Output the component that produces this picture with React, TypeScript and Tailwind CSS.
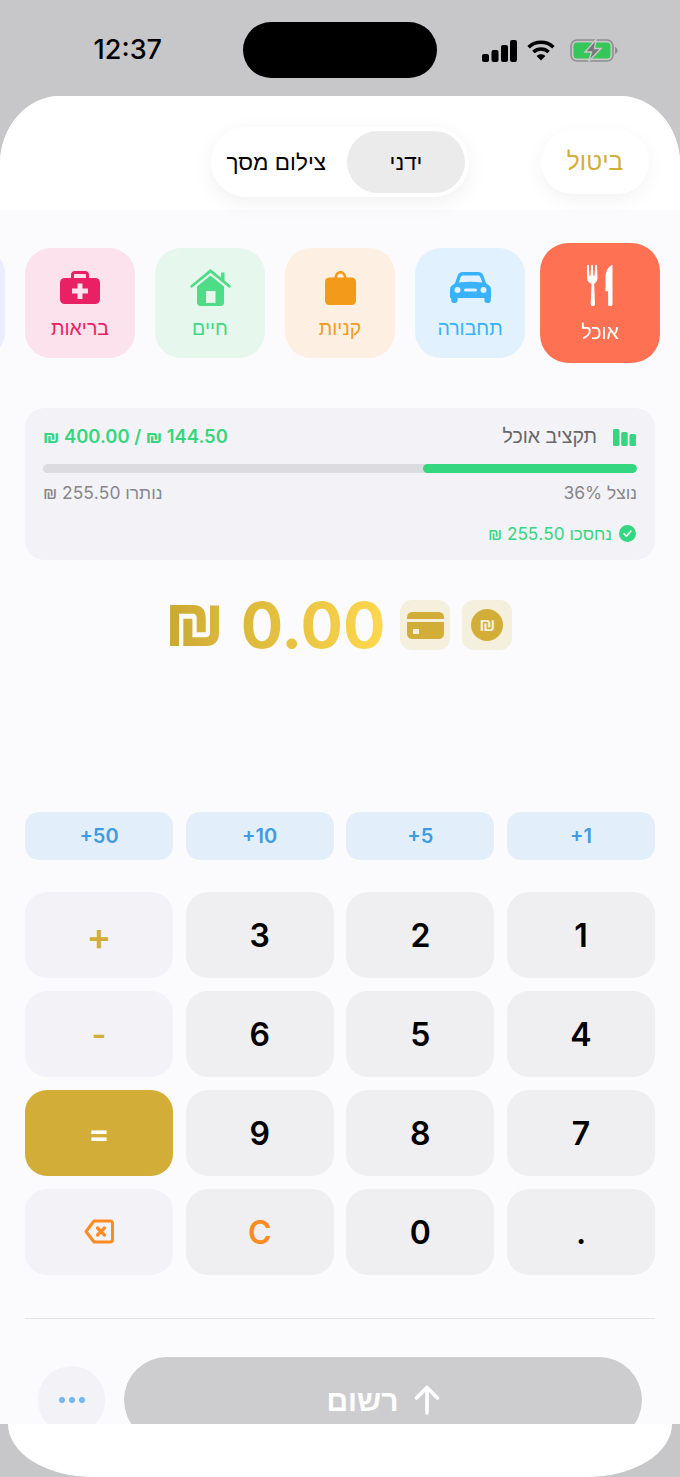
import React from "react";

const Signal = () => (
  <svg width="35" height="22" viewBox="0 0 35 22" fill="#000">
    <rect x="0" y="14" width="7" height="8" rx="2" />
    <rect x="9.5" y="10" width="7" height="12" rx="2" />
    <rect x="19" y="5" width="7" height="17" rx="2" />
    <rect x="28" y="0" width="7" height="22" rx="2" />
  </svg>
);
const Wifi = () => (
  <svg width="28" height="21" viewBox="0 0 28 21" fill="none" stroke="#000" strokeWidth="3.6">
    <path d="M1.6 7.2C8.6 .6 19.4 .6 26.4 7.2" />
    <path d="M6.4 12C10.8 8 17.2 8 21.6 12" />
    <path d="M14 20.5L9.6 16C12 13.8 16 13.8 18.4 16Z" fill="#000" stroke="none" />
  </svg>
);
const Battery = () => (
  <svg width="48" height="23" viewBox="0 0 48 23" fill="none">
    <rect x="1" y="1" width="42" height="21" rx="6" stroke="#8e8e90" strokeWidth="1.6" />
    <rect x="3.5" y="3.5" width="37" height="16" rx="3.5" fill="#35c759" />
    <path d="M45 8c1.6.4 2.5 1.8 2.5 3.5S46.600 14.600 45 15z" fill="#8e8e90" />
    <path d="M26 0.500L15 13h6.500l-3 9.500L31 9.500h-6.500z" fill="#77777a" stroke="#c9c9cb" strokeWidth="1.400" />
  </svg>
);

const ForkKnife = () => (
  <svg width="24" height="38.500" viewBox="0 0 26 42" fill="#fff">
    <path d="M0 0h1.800l.7 11h1.100l.500-11h1.800l.500 11h1.100l.700-11h1.800l.500 13c0 3-1.500 5-3.300 6l.8 20.500a2.100 2.100 0 01-4.300 0l.800-20.500C1.500 18 0 16 0 13z" />
    <path d="M25.500 0v39.500a2.200 2.200 0 01-4.400 0V26.500h-2.600V13C18.500 6 21.500 1.500 25.500 0z" />
  </svg>
);
const Car = () => (
  <svg width="41" height="31" viewBox="0 0 41 31" fill="#38b2fa" className="mb-[3px]">
    <path fillRule="evenodd" d="M13 0h15c3 0 4.600 1.300 5.500 4l2.600 7.500c3 1.500 4.900 3 4.900 6V26h-.2v2.300c0 1.500-1 2.700-2.400 2.700h-1.600c-1.400 0-2.400-1.200-2.400-2.700V26H7.600v2.300c0 1.500-1 2.700-2.400 2.700H3.600C2.200 31 1.200 29.800 1.200 28.300V26H0v-8.500c0-3 1.900-4.500 4.900-6L7.500 4C8.400 1.300 10 0 13 0zM13 3.500C11.800 3.500 11 4 10.600 5.300L8.700 10.500c7.500-1 16.100-1 23.600 0l-1.900-5.200C30 4 29.200 3.500 28 3.500zM7.500 15a3 3 0 100 6 3 3 0 000-6zm26 0a3 3 0 100 6 3 3 0 000-6zM15.500 16.500a1.500 1.500 0 000 3h10a1.500 1.500 0 000-3z" />
  </svg>
);
const Bag = () => (
  <svg width="31" height="34" viewBox="0 0 31 34" fill="#f39a1b" className="mb-[1px]">
    <path fillRule="evenodd" d="M15.500 0c3.200 0 5.500 2.200 6 6.500h5c2.800 0 4.500 1.700 4.500 4.500v18.500c0 2.800-1.700 4.500-4.500 4.500h-22C1.700 34 0 32.300 0 29.500V11c0-2.800 1.700-4.500 4.500-4.500h5c.5-4.300 2.800-6.500 6-6.500zm0 2.500c-1.800 0-3 1.400-3.400 4h6.800c-.4-2.600-1.600-4-3.400-4z" />
  </svg>
);
const House = () => (
  <svg width="41" height="37" viewBox="0 0 41 37" fill="#4fdc87">
    <path d="M20.500 0L31 8.500V3.500h3.500v8L41 17l-1.600 1.900L20.500 3.800 1.600 18.900 0 17z" />
    <path fillRule="evenodd" d="M20.500 6.500L34 17.500V33.500c0 2.300-1.200 3.500-3.500 3.500h-20C8.200 37 7 35.800 7 33.500V17.500zM16 22v12h9.500V22z" />
  </svg>
);
const Medical = () => (
  <svg width="40" height="33" viewBox="0 0 40 33" fill="#ea2064" className="mb-[2px]">
    <path fillRule="evenodd" d="M11 7V4c0-2.500 1.500-4 4-4h10c2.500 0 4 1.500 4 4v3h6c3.200 0 5 1.800 5 5v16c0 3.200-1.800 5-5 5H5c-3.200 0-5-1.800-5-5V12c0-3.200 1.800-5 5-5zm3-3v3h12V4c0-.7-.4-1-1-1H15c-.6 0-1 .3-1 1zm3.500 8.500v5h-5.500v5h5.500v5.500h5V22.500H28v-5h-5.500v-5z" />
  </svg>
);

const CategoryCard = ({ label, bg, color, icon, active }: { label: string; bg: string; color: string; icon: React.ReactNode; active?: boolean }) => (
  <div className={`flex h-[110px] w-[110px] shrink-0 flex-col items-center rounded-[26px] ${bg} ${active ? "scale-[1.09]" : ""}`}>
    <div className="flex h-[58px] items-end justify-center">{icon}</div>
    <div className={`${active ? "mt-[12px] text-[18px]" : "mt-[10px] text-[19.500px]"} leading-[24px] ${color}`}>{label}</div>
  </div>
);

const Key = ({ children, cls }: { children: React.ReactNode; cls: string }) => (
  <div className={`flex h-[86px] items-center justify-center rounded-[22px] pt-[2px] text-[32px] leading-none font-semibold ${cls}`}>{children}</div>
);

const Bars = () => (
  <svg width="23" height="17" viewBox="0 0 23 17" fill="#35d67f">
    <rect x="0" y="0" width="6.500" height="17" rx="1.500" />
    <rect x="8.200" y="3" width="6.500" height="14" rx="1.500" />
    <rect x="16.500" y="5" width="6.500" height="12" rx="1.500" />
  </svg>
);

const Backspace = () => (
  <svg width="30" height="25" viewBox="0 0 30 25" fill="none" stroke="#fb8c23" strokeWidth="3" strokeLinejoin="round" strokeLinecap="round" className="-mt-[3px]">
    <path d="M10 2h16c1.500 0 2.500 1 2.500 2.500v16c0 1.500-1 2.500-2.500 2.500H10L2 12.500z" />
    <path d="M13.500 9l7 7M20.500 9l-7 7" strokeWidth="3.200" />
  </svg>
);

export default function App() {
  return (
    <div className="flex h-[1477px] w-[680px] flex-col overflow-hidden bg-[#c7c7c9] font-['Inter','Liberation_Sans',sans-serif]">
      {/* Status bar */}
      <div className="flex h-[96px] shrink-0 items-start">
        <div className="flex h-[100px] w-[243px] justify-end pt-[33px] pr-[81px] text-[27px] leading-[34px] font-medium text-black">12:37</div>
        <div className="mt-[22px] h-[56px] w-[194px] rounded-[28px] bg-black" />
        <div className="mt-[39px] flex items-center pl-[45px]">
          <Signal />
          <div className="ml-[10px]"><Wifi /></div>
          <div className="ml-[15px]"><Battery /></div>
        </div>
      </div>

      {/* Sheet */}
      <div dir="rtl" className="flex h-[1328px] shrink-0 flex-col overflow-hidden rounded-t-[60px_68px] bg-[#fbfbfe]">
        <div className="grid h-[114px] shrink-0 grid-cols-[1fr_auto_1fr] items-center bg-white pt-[17px]">
          <div className="pr-[31px]">
            <div className="flex h-[64px] w-[108px] items-center justify-center rounded-[32px] bg-white text-[24.500px] text-[#d4ae38] shadow-[0_6px_20px_rgba(0,0,0,0.05)]">ביטול</div>
          </div>
          <div className="flex h-[70px] w-[258px] items-center rounded-[35px] bg-white pr-[4px] text-[22.500px] text-black shadow-[0_6px_22px_rgba(0,0,0,0.06)]">
            <div className="flex h-[62px] w-[118px] items-center justify-center rounded-[31px] bg-[#ebebec]">ידני</div>
            <div className="flex-1 pr-[21px] whitespace-nowrap">צילום מסך</div>
          </div>
          <div />
        </div>

        <div className="flex flex-1 flex-col">
          <div className="flex h-[168px] shrink-0 gap-[20px] overflow-hidden pt-[38px] pr-[25px]">
            <CategoryCard active label="אוכל" bg="bg-[#ff7152]" color="text-white" icon={<ForkKnife />} />
            <CategoryCard label="תחבורה" bg="bg-[#e1f1fd]" color="text-[#38b2fa]" icon={<Car />} />
            <CategoryCard label="קניות" bg="bg-[#fdf0e3]" color="text-[#f39a1b]" icon={<Bag />} />
            <CategoryCard label="חיים" bg="bg-[#e6f8ee]" color="text-[#3fd97f]" icon={<House />} />
            <CategoryCard label="בריאות" bg="bg-[#fbe2ec]" color="text-[#ea2064]" icon={<Medical />} />
            <CategoryCard label="" bg="bg-[#ecebff]" color="text-[#6f6af0]" icon={null} />
          </div>

          {/* Budget */}
          <div className="mx-[25px] mt-[30px] h-[152px] shrink-0 rounded-[20px] bg-[#f3f3f7] px-[18px] pt-[18px]">
            <div className="flex h-[22px] items-center justify-between">
              <div className="flex items-center gap-[16px] pr-[1px] text-[19.500px] text-[#66666b]">
                <Bars />
                <span className="whitespace-nowrap">תקציב אוכל</span>
              </div>
              <div dir="ltr" className="text-[18.400px] font-semibold text-[#35d67f]">₪ 400.00 / ₪ 144.50</div>
            </div>
            <div className="mt-[16px] flex h-[9px] overflow-hidden rounded-full bg-[#dcdce0]">
              <div className="h-full w-[36%] rounded-full bg-[#34d780]" />
            </div>
            <div className="mt-[10px] flex h-[20px] items-center justify-between text-[17.400px] text-[#86868b]">
              <span>נוצל 36%</span>
              <span>נותרו 255.50 ₪</span>
            </div>
            <div className="mt-[18px] flex items-center gap-[7px] pr-[1px] text-[17.200px] text-[#35d67f]">
              <svg width="17" height="17" viewBox="0 0 17 17">
                <circle cx="8.500" cy="8.500" r="8.500" fill="#34d780" />
                <path d="M5 8.800l2.400 2.500L12 6" fill="none" stroke="#fff" strokeWidth="1.500" strokeLinecap="round" strokeLinejoin="round" />
              </svg>
              <span>נחסכו 255.50 ₪</span>
            </div>
          </div>

          {/* Amount */}
          <div dir="ltr" className="mt-[40px] flex h-[50px] shrink-0 items-center justify-center pr-[2px]">
            <div className="origin-bottom scale-y-[1.200] bg-linear-to-r from-[#c9a733] to-[#dcb83a] bg-clip-text text-[63px] leading-[64px] font-bold whitespace-nowrap text-transparent">₪</div>
            <div className="ml-[17px] bg-linear-to-r from-[#dcb83a] to-[#ffd84f] bg-clip-text text-[63px] leading-[64px] font-bold whitespace-nowrap text-transparent">0.00</div>
            <div className="ml-[15px] flex h-[50px] w-[50px] items-center justify-center rounded-[12px] bg-[#f4f0dd]">
              <svg width="37" height="27" viewBox="0 0 37 27" fill="#d2ae38">
                <path d="M0 6c0-4 2-6 6-6h25c4 0 6 2 6 6v1H0z" />
                <path fillRule="evenodd" d="M0 10h37v11c0 4-2 6-6 6H6c-4 0-6-2-6-6zm6 7v5h6v-5z" />
              </svg>
            </div>
            <div className="ml-[12px] flex h-[50px] w-[50px] items-center justify-center rounded-[12px] bg-[#f4f0dd]">
              <div className="flex h-[32px] w-[32px] items-center justify-center rounded-full bg-[#d2ae38] text-[19px] font-medium text-[#f4f0dd]">₪</div>
            </div>
          </div>

          {/* Quick amounts */}
          <div className="mx-[25px] mt-[162px] grid shrink-0 grid-cols-4 gap-x-[12.670px]">
            {["+1", "+5", "+10", "+50"].map((t) => (
              <div key={t} dir="ltr" className="flex h-[48px] items-center justify-center rounded-[14px] bg-[#e2effb] text-[20px] font-semibold text-[#3f9be0]">{t}</div>
            ))}
          </div>

          {/* Keypad */}
          <div className="mx-[25px] mt-[32px] grid shrink-0 grid-cols-4 gap-x-[12.670px] gap-y-[13px]">
            <Key cls="bg-[#efeff1] text-black">1</Key>
            <Key cls="bg-[#efeff1] text-black">2</Key>
            <Key cls="bg-[#efeff1] text-black">3</Key>
            <Key cls="bg-[#f3f3f7] text-[37px] font-bold text-[#d2ae38]">+</Key>
            <Key cls="bg-[#efeff1] text-black">4</Key>
            <Key cls="bg-[#efeff1] text-black">5</Key>
            <Key cls="bg-[#efeff1] text-black">6</Key>
            <Key cls="bg-[#f3f3f7] text-[#d2ae38]">-</Key>
            <Key cls="bg-[#efeff1] text-black">7</Key>
            <Key cls="bg-[#efeff1] text-black">8</Key>
            <Key cls="bg-[#efeff1] text-black">9</Key>
            <Key cls="bg-[#d2ae38] text-white">=</Key>
            <Key cls="bg-[#efeff1] text-black">.</Key>
            <Key cls="bg-[#efeff1] text-black">0</Key>
            <Key cls="bg-[#efeff1] font-bold text-[#fb8c23]">C</Key>
            <Key cls="bg-[#f3f3f7]"><Backspace /></Key>
          </div>

          <div className="mx-[25px] mt-[43px] h-px shrink-0 bg-[#e3e3e6]" />

          {/* Action row */}
          <div dir="ltr" className="mt-[38px] flex shrink-0 items-center gap-[19px] pr-[38px] pl-[38px]">
            <div className="flex h-[68px] w-[67px] shrink-0 items-center justify-center gap-[4px] rounded-full bg-[#f3f3f7]">
              <span className="h-[6px] w-[6px] rounded-full bg-[#77b6f0]" />
              <span className="h-[6px] w-[6px] rounded-full bg-[#77b6f0]" />
              <span className="h-[6px] w-[6px] rounded-full bg-[#77b6f0]" />
            </div>
            <div className="flex h-[86px] flex-1 items-center justify-center gap-[15px] rounded-[43px] bg-[#cdcdd0] text-white">
              <span dir="rtl" className="text-[30px] font-bold">רשום</span>
              <svg width="26" height="30" viewBox="0 0 26 30" fill="none" stroke="#fff" strokeWidth="3.600" strokeLinecap="round" strokeLinejoin="round">
                <path d="M13 28V2.500M2.500 13L13 2.500 23.500 13" />
              </svg>
            </div>
          </div>
        </div>
      </div>

      {/* Bottom of the screen */}
      <div className="px-[8px]">
        <div className="h-[53px] rounded-b-[85px_53px] bg-white" />
      </div>
    </div>
  );
}
